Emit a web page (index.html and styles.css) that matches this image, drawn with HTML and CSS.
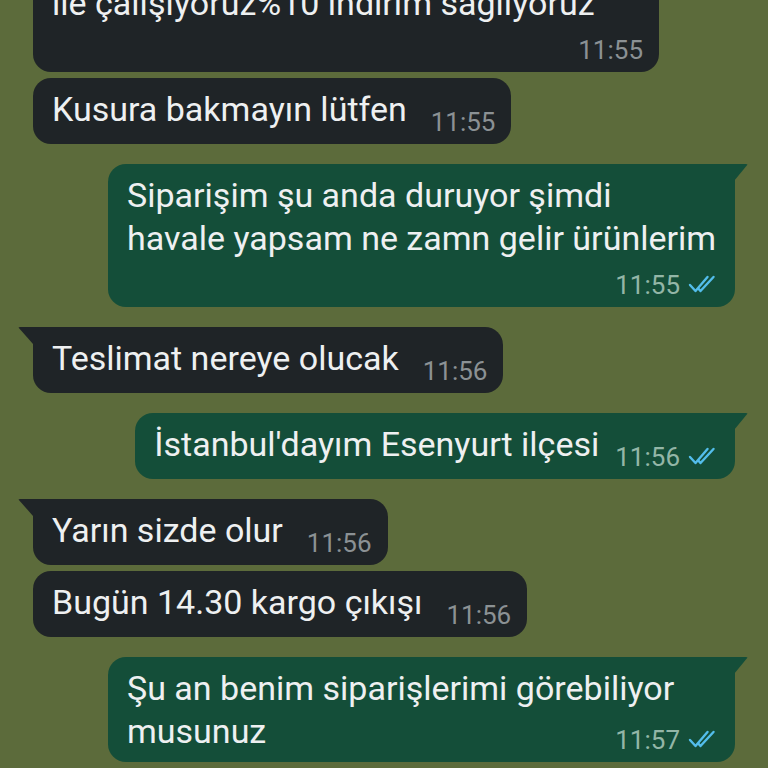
FILE: index.html
```html
<!DOCTYPE html>
<html lang="tr">
<head>
<meta charset="utf-8">
<title>Sohbet</title>
<link rel="stylesheet" href="styles.css">
</head>
<body>
<div class="chat">
  <div class="msg in stack wide-in">
    <div class="text">ile çalışıyoruz%10 indirim sağlıyoruz</div>
    <div class="meta"><span class="time">11:55</span></div>
  </div>
  <div class="msg in row">
    <div class="text">Kusura bakmayın lütfen</div>
    <div class="meta"><span class="time">11:55</span></div>
  </div>
  <div class="msg out stack wide-out tail">
    <div class="text">Siparişim şu anda duruyor şimdi<br>havale yapsam ne zamn gelir ürünlerim</div>
    <div class="meta"><span class="time">11:55</span><svg class="ticks" viewBox="0 0 30 18"><path d="M2 10 L7.5 16 L19.5 2 M12.5 16 L25.5 2 M10.2 13.4 L12.5 16"/></svg></div>
  </div>
  <div class="msg in row tail">
    <div class="text">Teslimat nereye olucak</div>
    <div class="meta"><span class="time">11:56</span></div>
  </div>
  <div class="msg out row tail">
    <div class="text">İstanbul'dayım Esenyurt ilçesi</div>
    <div class="meta"><span class="time">11:56</span><svg class="ticks" viewBox="0 0 30 18"><path d="M2 10 L7.5 16 L19.5 2 M12.5 16 L25.5 2 M10.2 13.4 L12.5 16"/></svg></div>
  </div>
  <div class="msg in row tail">
    <div class="text">Yarın sizde olur</div>
    <div class="meta"><span class="time">11:56</span></div>
  </div>
  <div class="msg in row">
    <div class="text">Bugün 14.30 kargo çıkışı</div>
    <div class="meta"><span class="time">11:56</span></div>
  </div>
  <div class="msg out stack tight wide-out tail">
    <div class="text">Şu an benim siparişlerimi görebiliyor<br>musunuz</div>
    <div class="meta"><span class="time">11:57</span><svg class="ticks" viewBox="0 0 30 18"><path d="M2 10 L7.5 16 L19.5 2 M12.5 16 L25.5 2 M10.2 13.4 L12.5 16"/></svg></div>
  </div>
  <div class="msg out stack wide-out">
    <div class="text">Sipariş numaram sizde var mı</div>
    <div class="meta"><span class="time">11:57</span><svg class="ticks" viewBox="0 0 30 18"><path d="M2 10 L7.5 16 L19.5 2 M12.5 16 L25.5 2 M10.2 13.4 L12.5 16"/></svg></div>
  </div>
</div>
</body>
</html>
```
FILE: styles.css
```css
* { box-sizing: border-box; }

html, body {
  margin: 0;
  padding: 0;
  height: 100%;
  overflow: hidden;
  background: #5c6b3b;
}

body {
  font-family: Roboto, "Noto Sans", "DejaVu Sans", sans-serif;
  color: #eef0f1;
}

.chat {
  display: flex;
  flex-direction: column;
  gap: 6px;
  padding: 0 33px;
  margin-top: -28px;
}

.msg {
  position: relative;
  border-radius: 18px;
  padding: 10px 16px 7px 19px;
}

.in {
  align-self: flex-start;
  background: #1f2427;
}

.out {
  align-self: flex-end;
  background: #144e39;
  padding-right: 17px;
}

.wide-in { width: 626px; }
.wide-out { width: 627px; }

.text {
  font-size: 34px;
  line-height: 43px;
  white-space: nowrap;
}

.row {
  display: flex;
  align-items: flex-end;
}

.row .text { margin-bottom: 6px; }

.meta {
  display: flex;
  justify-content: flex-end;
  align-items: flex-start;
  gap: 8px;
  height: 30px;
  font-size: 26px;
  line-height: 30px;
}

.in .time { color: #8b9194; }
.out .time { color: #93b6a7; }

.in.row .meta { margin-left: 24px; }
.out.row .meta { margin-left: 16px; }

.stack .meta { margin-top: 10px; }
.stack.tight .meta { margin-top: -28px; }

.ticks {
  width: 30px;
  height: 18px;
  margin-top: 5px;
  fill: none;
  stroke: #53bdeb;
  stroke-width: 2.4;
  stroke-linecap: round;
  stroke-linejoin: round;
}

.tail { margin-top: 14px; }

.in.tail { border-top-left-radius: 0; }
.out.tail { border-top-right-radius: 0; }

.in.tail::before {
  content: "";
  position: absolute;
  top: 0;
  left: -15px;
  width: 16px;
  height: 17px;
  background: #1f2427;
  clip-path: polygon(0 0, 100% 0, 100% 100%, 94% 100%);
  border-top-left-radius: 2px;
}

.out.tail::after {
  content: "";
  position: absolute;
  top: 0;
  right: -13px;
  width: 14px;
  height: 16px;
  background: #144e39;
  clip-path: polygon(0 0, 100% 0, 6% 100%, 0 100%);
  border-top-right-radius: 2px;
}
```
